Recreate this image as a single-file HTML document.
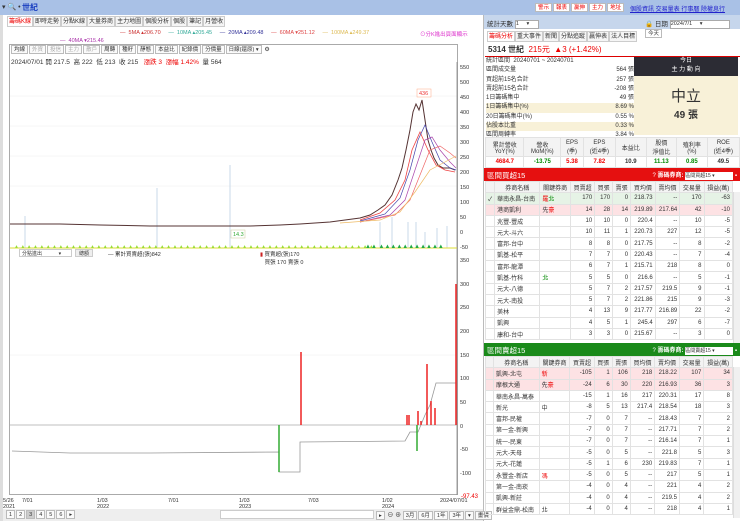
<!DOCTYPE html><html><head><meta charset="utf-8"><style>
*{margin:0;padding:0;box-sizing:border-box}
body{width:740px;height:521px;overflow:hidden;background:#fff;font-family:"Liberation Sans","Noto Sans CJK TC",sans-serif;font-size:6px;color:#333;position:relative}
.a{position:absolute}
.tab{display:inline-block;border:1px solid #ccc;background:#f5f5f5;padding:0 1px;height:11px;line-height:10px;font-size:6px;margin-right:0}
.btn{display:inline-block;border:1px solid #bbb;background:#fafafa;padding:0 2px;height:9px;line-height:8px;font-size:5.5px;margin-right:1px}
table{border-collapse:collapse;width:100%}
td{border:1px solid #e2e2e2;height:11.3px;font-size:6px;padding:0 2px;text-align:right;white-space:nowrap}
td.l{text-align:left}
.hd td{background:#f3f3f3;text-align:center}
.r{color:#e00}.g{color:#080}
</style></head><body>
<div class="a" style="left:0;top:0;width:740px;height:15px;background:#a9c1e6"></div>
<div class="a" style="left:2px;top:3px;font-size:7px">▾ 🔍 •</div>
<div class="a" style="left:22px;top:2px;font-size:8px;color:#1a3fc0;font-weight:bold">世紀</div>
<div class="a" style="left:535px;top:3px;font-size:6px"><span class="btn r" style="background:#fff">警示</span><span class="btn r" style="background:#fff">報表</span><span class="btn r" style="background:#fff">贏伸</span><span class="btn r" style="background:#fff">主力</span><span class="btn r" style="background:#fff">地址</span></div>
<div class="a" style="left:630px;top:4px;font-size:6px;color:#22c;text-decoration:underline">個股資訊 交易量表 行事曆 除權息行</div>
<div class="a" style="left:0;top:15px;width:484px;height:506px;background:#fff;border-right:1px solid #bbb"></div>
<div class="a" style="left:0;top:15px;width:3px;height:506px;background:#ddd"></div>
<div class="a" style="left:7px;top:16px;white-space:nowrap"><span class="tab r" style="background:#fff">籌碼K線</span><span class="tab">即時走勢</span><span class="tab">分點K線</span><span class="tab">大量券商</span><span class="tab">主力地圖</span><span class="tab">個股分析</span><span class="tab">個股</span><span class="tab">筆記</span><span class="tab">月營收</span></div>
<div class="a" style="left:120px;top:30px;font-size:5.5px;white-space:nowrap"><span style="color:#c33">— &nbsp;5MA ▴206.70</span> &nbsp;&nbsp;&nbsp;&nbsp;<span style="color:#3a9">— &nbsp;10MA ▴205.45</span> &nbsp;&nbsp;&nbsp;&nbsp;<span style="color:#339">— &nbsp;20MA ▴209.48</span> &nbsp;&nbsp;&nbsp;&nbsp;<span style="color:#d44">— &nbsp;60MA ▾251.12</span> &nbsp;&nbsp;&nbsp;&nbsp;<span style="color:#db5">— &nbsp;100MA ▴249.37</span></div>
<div class="a" style="left:420px;top:30px;font-size:5.5px;color:#d3c">⊙分K進出頁面顯示</div>
<div class="a" style="left:60px;top:38px;font-size:5.5px;color:#a3a">— &nbsp;40MA ▾215.46</div>
<div class="a" style="left:9px;top:44px;width:449px;height:451px;border:1px solid #aaa"></div>
<div class="a" style="left:11px;top:45px;white-space:nowrap"><span class="btn">均線</span><span class="btn" style="color:#aaa">外資</span><span class="btn" style="color:#aaa">投信</span><span class="btn" style="color:#aaa">主力</span><span class="btn" style="color:#aaa">散戶</span><span class="btn">周轉</span><span class="btn">種籽</span><span class="btn">靜態</span><span class="btn">本益比</span><span class="btn">紀錄價</span><span class="btn">分價量</span><span class="btn" style="width:36px">日線(還原) ▾</span> ⚙</div>
<div class="a" style="left:11px;top:56px;font-size:6.5px;white-space:nowrap">2024/07/01 開 217.5 &nbsp;高 222 &nbsp;低 213 &nbsp;收 215 &nbsp;&nbsp;<span class="r">漲跌 3 &nbsp;漲幅 1.42%</span> &nbsp;量 564</div>
<svg class="a" style="left:0;top:0" width="484" height="521" viewBox="0 0 484 521">
<g stroke="#eee" stroke-width=".5">
<line x1="10" x2="457" y1="96" y2="96"/><line x1="10" x2="457" y1="126" y2="126"/><line x1="10" x2="457" y1="156" y2="156"/><line x1="10" x2="457" y1="186" y2="186"/><line x1="10" x2="457" y1="355" y2="355"/></g>
<line x1="457" y1="62" x2="457" y2="495" stroke="#888" stroke-width=".8"/>
<g font-size="5.5" fill="#333">
<text x="460" y="69">550</text><text x="460" y="84">500</text><text x="460" y="99">450</text><text x="460" y="114">400</text><text x="460" y="129">350</text><text x="460" y="144">300</text><text x="460" y="159">250</text><text x="460" y="174">200</text><text x="460" y="189">150</text><text x="460" y="204">100</text><text x="460" y="219">50</text><text x="460" y="234">0</text><text x="460" y="249">-50</text>
<text x="460" y="262">350</text><text x="460" y="286">300</text><text x="460" y="309">250</text><text x="460" y="333">200</text><text x="460" y="357">150</text><text x="460" y="380">100</text><text x="460" y="404">50</text><text x="460" y="428">0</text><text x="460" y="451">-50</text><text x="460" y="475">-100</text>
<text x="461" y="498" fill="#e00" font-size="6">-97.43</text>
<text x="3" y="502">5/26</text><text x="3" y="508">2021</text><text x="22" y="502">7/01</text><text x="97" y="502">1/03</text><text x="97" y="508">2022</text><text x="168" y="502">7/01</text><text x="239" y="502">1/03</text><text x="239" y="508">2023</text><text x="308" y="502">7/03</text><text x="382" y="502">1/02</text><text x="382" y="508">2024</text><text x="440" y="502">2024/07/01</text>
</g>
<g stroke="#c8d8e8" stroke-width="1"><line x1="25" y1="216" x2="25" y2="248"/><line x1="157" y1="188" x2="157" y2="248"/><line x1="230" y1="165" x2="230" y2="248"/><line x1="380" y1="222" x2="380" y2="248"/><line x1="392" y1="217" x2="392" y2="248"/><line x1="408" y1="222" x2="408" y2="248"/><line x1="416" y1="222" x2="416" y2="248"/><line x1="425" y1="232" x2="425" y2="248"/><line x1="437" y1="228" x2="437" y2="248"/><line x1="447" y1="226" x2="447" y2="248"/></g>
<line x1="10" y1="248" x2="457" y2="248" stroke="#dd3" stroke-width="1"/>
<text x="14" y="248" font-size="5" fill="#9d3">▲ ▲ ▲ ▲ ▲ ▲ ▲ ▲ ▲ ▲ ▲ ▲ ▲ ▲ ▲ ▲ ▲ ▲ ▲ ▲ ▲ ▲ ▲ ▲ ▲ ▲ ▲ ▲ ▲ ▲ ▲ ▲ ▲ ▲ ▲ ▲ ▲ ▲ ▲ ▲ ▲ ▲ ▲ ▲ ▲ ▲ ▲ ▲ ▲ ▲ ▲ ▲ ▲ ▲ ▲ ▲ ▲</text>
<text x="365" y="248" font-size="6" fill="#2a4">▲▲ ▲▲▲▲▲▲▲▲▲▲▲</text>
<rect x="231" y="230" width="14" height="8" fill="#fff" stroke="#cc9" stroke-width=".5"/><text x="233" y="236" font-size="5.5" fill="#3a3">14.3</text>
<rect x="417" y="89" width="14" height="8" fill="#fff" stroke="#fa8" stroke-width=".5"/><text x="419" y="95" font-size="5.5" fill="#e33">436</text>
<polyline fill="none" stroke="#533" stroke-width="1" points="10,224 60,224 100,225 150,226 200,226 250,226 280,225 300,224 330,222 345,220 360,218 370,215 378,210 385,205 392,195 398,180 402,168 406,150 410,130 413,112 416,104 419,110 422,100 425,120 428,140 431,150 434,158 438,165 443,168 450,168 455,170"/>
<polyline fill="none" stroke="#e44" stroke-width=".8" points="360,220 380,213 395,200 405,180 412,150 420,132 428,150 436,165 445,170 455,172"/>
<polyline fill="none" stroke="#44a" stroke-width=".7" points="360,221 385,214 400,198 410,170 418,140 425,125 432,142 440,160 450,168 456,170"/>
<polyline fill="none" stroke="#a4a" stroke-width=".7" points="360,222 390,215 405,200 415,170 425,140 432,137 440,150 450,162 456,168"/>
<polyline fill="none" stroke="#e66" stroke-width=".7" points="360,222 395,215 410,200 420,175 430,150 440,146 450,153 456,158"/>
<polyline fill="none" stroke="#eb6" stroke-width=".7" points="340,223 380,220 400,212 415,192 430,170 445,162 456,156"/>
<line x1="10" y1="425" x2="457" y2="425" stroke="#aaa" stroke-width=".8"/>
<polyline fill="none" stroke="#999" stroke-width=".8" points="12,451 70,453 150,453 279,452 279,472 300,472 300,442 405,441 410,432 418,432 425,415 430,405 436,383 456,383"/>
<g stroke="#e22" stroke-width="1.5"><line x1="301" y1="425" x2="301" y2="352"/><line x1="407" y1="425" x2="407" y2="415"/><line x1="409" y1="425" x2="409" y2="415"/><line x1="418" y1="425" x2="418" y2="411"/><line x1="421" y1="425" x2="421" y2="421"/><line x1="427" y1="425" x2="427" y2="364"/><line x1="431" y1="425" x2="431" y2="401"/><line x1="435" y1="425" x2="435" y2="408"/><line x1="456" y1="425" x2="456" y2="284"/></g>
<g stroke="#3a3" stroke-width="1.5"><line x1="279" y1="425" x2="279" y2="472"/><line x1="417" y1="425" x2="417" y2="451"/></g>
</svg>
<div class="a" style="left:19px;top:249px;width:53px;height:8px;border:1px solid #ccc;font-size:5px;padding-left:2px;background:#fff">分點進出 &nbsp;&nbsp;&nbsp;&nbsp;&nbsp;&nbsp;&nbsp;&nbsp;&nbsp;&nbsp;&nbsp;▾</div>
<div class="a" style="left:75px;top:249px;width:18px;height:8px;border:1px solid #ccc;background:#eee;font-size:5px;text-align:center">總額</div>
<div class="a" style="left:108px;top:250px;font-size:5.5px">— 累計買賣超(張)842</div>
<div class="a" style="left:260px;top:250px;font-size:5.5px"><span style="color:#c22">▮</span> 買賣超(張)170<br>&nbsp;&nbsp;&nbsp;買張 170 賣張 0</div>
<div class="a" style="left:3px;top:509px;width:480px;height:12px;background:#eee"></div>
<div class="a" style="left:6px;top:510px"><span class="btn">1</span><span class="btn">2</span><span class="btn" style="background:#ccc">3</span><span class="btn">4</span><span class="btn">5</span><span class="btn">6</span><span class="btn">▸</span></div>
<div class="a" style="left:220px;top:510px;width:154px;height:9px;background:#fff;border:1px solid #ccc"></div>
<div class="a" style="left:376px;top:510px"><span class="btn">▸</span> ⊖ ⊕ <span class="btn">3月</span><span class="btn">6月</span><span class="btn">1年</span><span class="btn">3年</span><span class="btn">▾</span><span class="btn">畫價</span></div>
<div class="a" style="left:484px;top:15px;width:256px;height:14px;background:#c6d6ec"></div>
<div class="a" style="left:487px;top:18px;font-size:6.5px">統計天數 <span style="display:inline-block;width:24px;height:9px;border:1px solid #aaa;background:#fff;font-size:5.5px;vertical-align:middle">1 &nbsp;&nbsp;&nbsp;&nbsp;▾</span></div>
<div class="a" style="left:645px;top:18px;font-size:6.5px">🔒 日期 <span style="display:inline-block;width:60px;height:9px;border:1px solid #aaa;background:#fff;font-size:5.5px;vertical-align:middle">2024/7/1 &nbsp;&nbsp;&nbsp;&nbsp;▾</span> <span class="btn" style="background:#fff">今天</span></div>
<div class="a" style="left:487px;top:31px;white-space:nowrap"><span class="tab r" style="background:#fff">籌碼分析</span><span class="tab">重大事件</span><span class="tab">新聞</span><span class="tab">分點追蹤</span><span class="tab">贏伸表</span><span class="tab">法人目標</span></div>
<div class="a" style="left:488px;top:44px;font-size:8px;white-space:nowrap"><b>5314 世紀</b> &nbsp;<span class="r">215元 &nbsp;▲3 (+1.42%)</span></div>
<div class="a" style="left:485px;top:56px;width:255px;height:1px;background:#d00"></div>
<div class="a" style="left:486px;top:57px;width:148px;font-size:6px;line-height:9.3px">
<div>統計區間 &nbsp;20240701 ~ 20240701</div>
<div>區間成交量<span style="float:right">564 張</span></div>
<div>買超前15名合計<span style="float:right">257 張</span></div>
<div>賣超前15名合計<span style="float:right">-208 張</span></div>
<div>1日籌碼集中<span style="float:right">49 張</span></div>
<div style="background:#f8f1d8">1日籌碼集中(%)<span style="float:right">8.69 %</span></div>
<div>20日籌碼集中(%)<span style="float:right">0.55 %</span></div>
<div style="background:#f8f1d8">佔股本比重<span style="float:right">0.33 %</span></div>
<div>區間周轉率<span style="float:right">3.84 %</span></div>
</div>
<div class="a" style="left:634px;top:57px;width:104px;height:19px;background:#2c2c34;color:#fff;font-size:6px;text-align:center;line-height:9px">今日<br>主 力 動 向</div>
<div class="a" style="left:634px;top:76px;width:104px;height:59px;background:#f8f1d8;text-align:center"><div style="font-size:15px;margin-top:9px;color:#333">中立</div><div style="font-size:10px;font-weight:bold">49 張</div></div>
<div class="a" style="left:485px;top:137px;width:255px">
<table><tr class="hd"><td style="height:19px">累計營收<br>YoY(%)</td><td>營收<br>MoM(%)</td><td>EPS<br>(季)</td><td>EPS<br>(近4季)</td><td>本益比</td><td>股價<br>淨值比</td><td>殖利率<br>(%)</td><td>ROE<br>(近4季)</td></tr>
<tr style="font-weight:bold"><td class="r" style="text-align:center">4684.7</td><td class="g" style="text-align:center">-13.75</td><td class="r" style="text-align:center">5.38</td><td class="r" style="text-align:center">7.82</td><td style="text-align:center">10.9</td><td class="g" style="text-align:center">11.13</td><td class="g" style="text-align:center">0.85</td><td style="text-align:center">49.5</td></tr></table></div>
<div class="a" style="left:484px;top:168px;width:256px;height:13px;background:#e51010;color:#fff;font-size:7.5px;padding:2px 3px">區間買超15<span style="float:right;font-size:6px">? <b>籌碼券商:</b> <span style="display:inline-block;width:48px;height:8px;background:#fff;color:#333;font-size:5px">區間買超15 ▾</span> ▪</span></div>
<div class="a" style="left:485px;top:181px;width:248px">
<table><tr class="hd"><td style="width:8px"></td><td>券商名稱</td><td>關鍵券商</td><td>買賣超</td><td>買張</td><td>賣張</td><td>買均價</td><td>賣均價</td><td>交易量</td><td>損益(萬)</td></tr>
<tr style="background:#e6f3e6"><td>✓</td><td class="l">華南永昌-台南</td><td class="l"><span class="r">羅</span><span class="g">北</span></td><td>170</td><td>170</td><td>0</td><td>218.73</td><td>--</td><td>170</td><td>-63</td></tr>
<tr style="background:#fde2e4"><td></td><td class="l">港商凱利</td><td class="l">先<span class="r">豪</span></td><td>14</td><td>28</td><td>14</td><td>219.89</td><td>217.64</td><td>42</td><td>-10</td></tr>
<tr><td></td><td class="l">兆豐-豐成</td><td></td><td>10</td><td>10</td><td>0</td><td>220.4</td><td>--</td><td>10</td><td>-5</td></tr>
<tr><td></td><td class="l">元大-斗六</td><td></td><td>10</td><td>11</td><td>1</td><td>220.73</td><td>227</td><td>12</td><td>-5</td></tr>
<tr><td></td><td class="l">富邦-台中</td><td></td><td>8</td><td>8</td><td>0</td><td>217.75</td><td>--</td><td>8</td><td>-2</td></tr>
<tr><td></td><td class="l">凱基-松平</td><td></td><td>7</td><td>7</td><td>0</td><td>220.43</td><td>--</td><td>7</td><td>-4</td></tr>
<tr><td></td><td class="l">富邦-龍潭</td><td></td><td>6</td><td>7</td><td>1</td><td>215.71</td><td>218</td><td>8</td><td>0</td></tr>
<tr><td></td><td class="l">凱基-竹科</td><td class="l g">北</td><td>5</td><td>5</td><td>0</td><td>216.6</td><td>--</td><td>5</td><td>-1</td></tr>
<tr><td></td><td class="l">元大-八德</td><td></td><td>5</td><td>7</td><td>2</td><td>217.57</td><td>219.5</td><td>9</td><td>-1</td></tr>
<tr><td></td><td class="l">元大-南投</td><td></td><td>5</td><td>7</td><td>2</td><td>221.86</td><td>215</td><td>9</td><td>-3</td></tr>
<tr><td></td><td class="l">美林</td><td></td><td>4</td><td>13</td><td>9</td><td>217.77</td><td>216.89</td><td>22</td><td>-2</td></tr>
<tr><td></td><td class="l">凱興</td><td></td><td>4</td><td>5</td><td>1</td><td>245.4</td><td>297</td><td>6</td><td>-7</td></tr>
<tr><td></td><td class="l">康和-台中</td><td></td><td>3</td><td>3</td><td>0</td><td>215.67</td><td>--</td><td>3</td><td>0</td></tr></table></div>
<div class="a" style="left:484px;top:343px;width:256px;height:13px;background:#1a8a1a;color:#fff;font-size:7.5px;padding:2px 3px">區間賣超15<span style="float:right;font-size:6px">? <b>籌碼券商:</b> <span style="display:inline-block;width:48px;height:8px;background:#fff;color:#333;font-size:5px">區間賣超15 ▾</span> ▪</span></div>
<div class="a" style="left:485px;top:356px;width:248px">
<table><tr class="hd"><td style="width:8px"></td><td>券商名稱</td><td>關鍵券商</td><td>買賣超</td><td>買張</td><td>賣張</td><td>買均價</td><td>賣均價</td><td>交易量</td><td>損益(萬)</td></tr>
<tr style="background:#fde2e4"><td></td><td class="l">凱興-北屯</td><td class="l r">新</td><td>-105</td><td>1</td><td>106</td><td>218</td><td>218.22</td><td>107</td><td>34</td></tr>
<tr style="background:#fde2e4"><td></td><td class="l">摩根大通</td><td class="l">先<span class="r">豪</span></td><td>-24</td><td>6</td><td>30</td><td>220</td><td>216.93</td><td>36</td><td>3</td></tr>
<tr><td></td><td class="l">華南永昌-萬泰</td><td></td><td>-15</td><td>1</td><td>16</td><td>217</td><td>220.31</td><td>17</td><td>8</td></tr>
<tr><td></td><td class="l">新光</td><td class="l">中</td><td>-8</td><td>5</td><td>13</td><td>217.4</td><td>218.54</td><td>18</td><td>3</td></tr>
<tr><td></td><td class="l">富邦-民權</td><td></td><td>-7</td><td>0</td><td>7</td><td>--</td><td>218.43</td><td>7</td><td>2</td></tr>
<tr><td></td><td class="l">第一金-新興</td><td></td><td>-7</td><td>0</td><td>7</td><td>--</td><td>217.71</td><td>7</td><td>2</td></tr>
<tr><td></td><td class="l">統一-民東</td><td></td><td>-7</td><td>0</td><td>7</td><td>--</td><td>216.14</td><td>7</td><td>1</td></tr>
<tr><td></td><td class="l">元大-天母</td><td></td><td>-5</td><td>0</td><td>5</td><td>--</td><td>221.8</td><td>5</td><td>3</td></tr>
<tr><td></td><td class="l">元大-花蓮</td><td></td><td>-5</td><td>1</td><td>6</td><td>230</td><td>219.83</td><td>7</td><td>1</td></tr>
<tr><td></td><td class="l">永豐金-新店</td><td class="l r">馮</td><td>-5</td><td>0</td><td>5</td><td>--</td><td>217</td><td>5</td><td>1</td></tr>
<tr><td></td><td class="l">第一金-南崁</td><td></td><td>-4</td><td>0</td><td>4</td><td>--</td><td>221</td><td>4</td><td>2</td></tr>
<tr><td></td><td class="l">凱興-新莊</td><td></td><td>-4</td><td>0</td><td>4</td><td>--</td><td>219.5</td><td>4</td><td>2</td></tr>
<tr><td></td><td class="l">群益金鼎-松南</td><td class="l">北</td><td>-4</td><td>0</td><td>4</td><td>--</td><td>218</td><td>4</td><td>1</td></tr></table></div>
<div class="a" style="left:733px;top:192px;width:7px;height:151px;background:#f0f0f0;border-left:1px solid #ddd"></div>
<div class="a" style="left:733px;top:367px;width:7px;height:151px;background:#f0f0f0;border-left:1px solid #ddd"></div>
</body></html>
